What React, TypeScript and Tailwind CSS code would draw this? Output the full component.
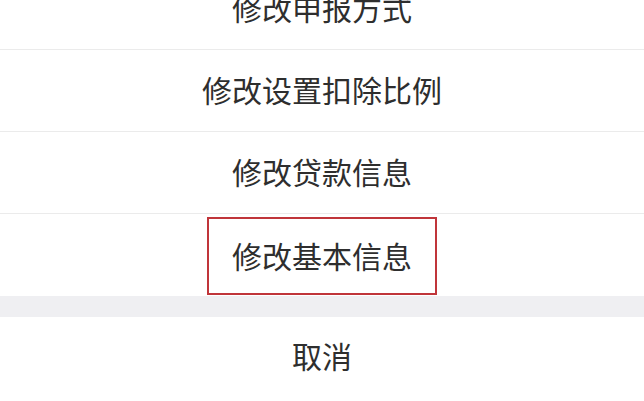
import React from "react";

const font = { fontFamily: '"Noto Sans CJK SC", "Noto Sans", sans-serif' };

function Row({ label, last }: { label: string; last?: boolean }) {
  return (
    <div
      className={
        "flex h-[82px] items-center justify-center bg-white " +
        (last ? "" : "border-b border-[#ebebeb]")
      }
    >
      <span className="pb-[4px] text-[30px] leading-none text-[#2e2e2e]">{label}</span>
    </div>
  );
}

export default function App() {
  return (
    <div className="h-[401px] w-[644px] overflow-hidden bg-white" style={font}>
      <div className="-mt-[32px] flex flex-col">
        <Row label="修改申报方式" />
        <Row label="修改设置扣除比例" />
        <Row label="修改贷款信息" />
        <div className="flex h-[82px] items-start justify-center bg-white">
          <div className="mt-[3px] flex h-[78px] w-[230px] items-center justify-center border-2 border-[#c0353a]">
            <span className="pb-[3px] text-[30px] leading-none text-[#2e2e2e]">修改基本信息</span>
          </div>
        </div>
        <div className="h-[21px] bg-[#efeff2]" />
        <div className="flex h-[83px] items-center justify-center bg-white">
          <span className="pb-[8px] text-[30px] leading-none text-[#2e2e2e]">取消</span>
        </div>
      </div>
    </div>
  );
}
